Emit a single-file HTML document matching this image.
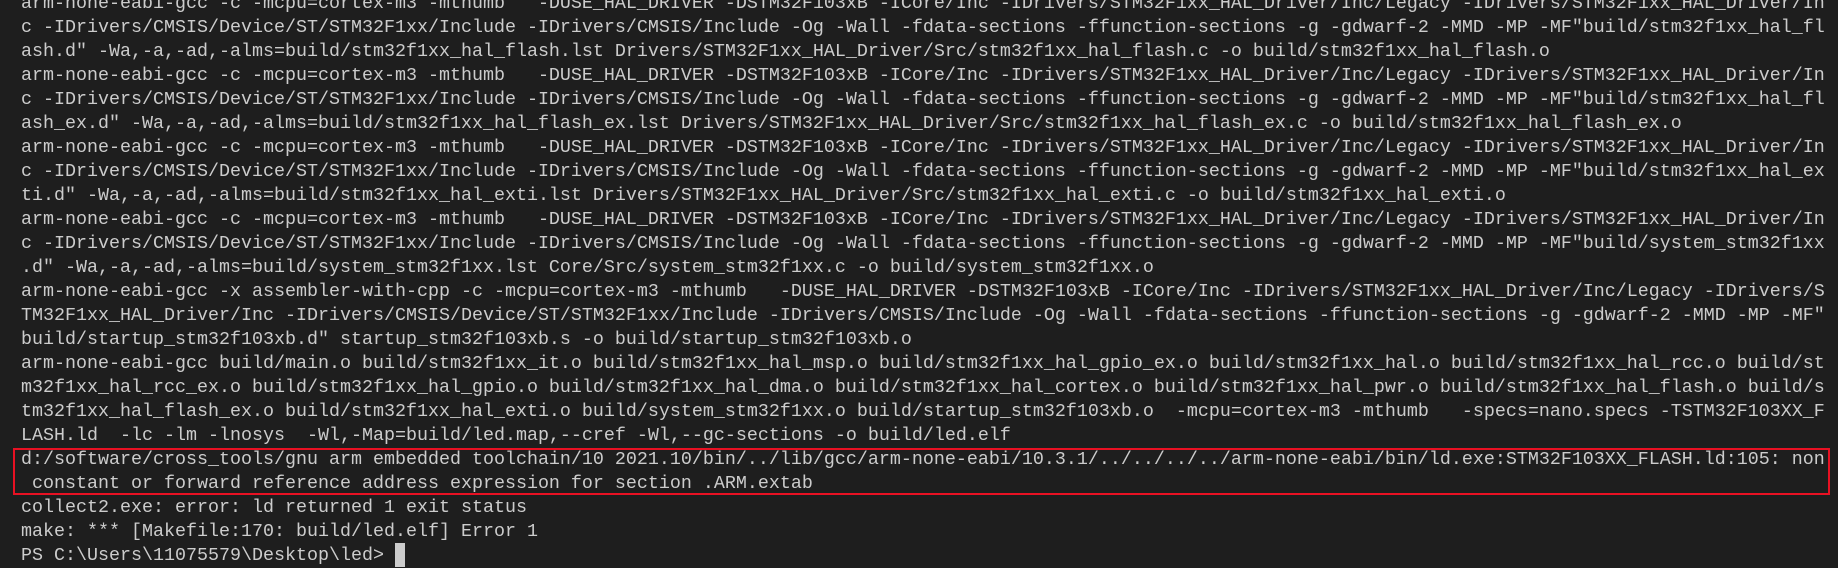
<!DOCTYPE html>
<html><head><meta charset="utf-8"><style>
html,body{margin:0;padding:0;background:#1e1e1e;width:1838px;height:567px;overflow:hidden}
pre{position:absolute;left:21px;top:-8px;margin:0;font-family:"Liberation Mono",monospace;font-size:18.33px;line-height:24px;color:#cccccc;white-space:pre}
.box{position:absolute;left:13px;top:448px;width:1813px;height:43px;border:2px solid #e81123}
.cur{position:absolute;left:395px;top:543px;width:10px;height:24px;background:#cccccc}
</style></head><body>
<pre>arm-none-eabi-gcc -c -mcpu=cortex-m3 -mthumb   -DUSE_HAL_DRIVER -DSTM32F103xB -ICore/Inc -IDrivers/STM32F1xx_HAL_Driver/Inc/Legacy -IDrivers/STM32F1xx_HAL_Driver/In
c -IDrivers/CMSIS/Device/ST/STM32F1xx/Include -IDrivers/CMSIS/Include -Og -Wall -fdata-sections -ffunction-sections -g -gdwarf-2 -MMD -MP -MF"build/stm32f1xx_hal_fl
ash.d" -Wa,-a,-ad,-alms=build/stm32f1xx_hal_flash.lst Drivers/STM32F1xx_HAL_Driver/Src/stm32f1xx_hal_flash.c -o build/stm32f1xx_hal_flash.o
arm-none-eabi-gcc -c -mcpu=cortex-m3 -mthumb   -DUSE_HAL_DRIVER -DSTM32F103xB -ICore/Inc -IDrivers/STM32F1xx_HAL_Driver/Inc/Legacy -IDrivers/STM32F1xx_HAL_Driver/In
c -IDrivers/CMSIS/Device/ST/STM32F1xx/Include -IDrivers/CMSIS/Include -Og -Wall -fdata-sections -ffunction-sections -g -gdwarf-2 -MMD -MP -MF"build/stm32f1xx_hal_fl
ash_ex.d" -Wa,-a,-ad,-alms=build/stm32f1xx_hal_flash_ex.lst Drivers/STM32F1xx_HAL_Driver/Src/stm32f1xx_hal_flash_ex.c -o build/stm32f1xx_hal_flash_ex.o
arm-none-eabi-gcc -c -mcpu=cortex-m3 -mthumb   -DUSE_HAL_DRIVER -DSTM32F103xB -ICore/Inc -IDrivers/STM32F1xx_HAL_Driver/Inc/Legacy -IDrivers/STM32F1xx_HAL_Driver/In
c -IDrivers/CMSIS/Device/ST/STM32F1xx/Include -IDrivers/CMSIS/Include -Og -Wall -fdata-sections -ffunction-sections -g -gdwarf-2 -MMD -MP -MF"build/stm32f1xx_hal_ex
ti.d" -Wa,-a,-ad,-alms=build/stm32f1xx_hal_exti.lst Drivers/STM32F1xx_HAL_Driver/Src/stm32f1xx_hal_exti.c -o build/stm32f1xx_hal_exti.o
arm-none-eabi-gcc -c -mcpu=cortex-m3 -mthumb   -DUSE_HAL_DRIVER -DSTM32F103xB -ICore/Inc -IDrivers/STM32F1xx_HAL_Driver/Inc/Legacy -IDrivers/STM32F1xx_HAL_Driver/In
c -IDrivers/CMSIS/Device/ST/STM32F1xx/Include -IDrivers/CMSIS/Include -Og -Wall -fdata-sections -ffunction-sections -g -gdwarf-2 -MMD -MP -MF"build/system_stm32f1xx
.d" -Wa,-a,-ad,-alms=build/system_stm32f1xx.lst Core/Src/system_stm32f1xx.c -o build/system_stm32f1xx.o
arm-none-eabi-gcc -x assembler-with-cpp -c -mcpu=cortex-m3 -mthumb   -DUSE_HAL_DRIVER -DSTM32F103xB -ICore/Inc -IDrivers/STM32F1xx_HAL_Driver/Inc/Legacy -IDrivers/S
TM32F1xx_HAL_Driver/Inc -IDrivers/CMSIS/Device/ST/STM32F1xx/Include -IDrivers/CMSIS/Include -Og -Wall -fdata-sections -ffunction-sections -g -gdwarf-2 -MMD -MP -MF"
build/startup_stm32f103xb.d" startup_stm32f103xb.s -o build/startup_stm32f103xb.o
arm-none-eabi-gcc build/main.o build/stm32f1xx_it.o build/stm32f1xx_hal_msp.o build/stm32f1xx_hal_gpio_ex.o build/stm32f1xx_hal.o build/stm32f1xx_hal_rcc.o build/st
m32f1xx_hal_rcc_ex.o build/stm32f1xx_hal_gpio.o build/stm32f1xx_hal_dma.o build/stm32f1xx_hal_cortex.o build/stm32f1xx_hal_pwr.o build/stm32f1xx_hal_flash.o build/s
tm32f1xx_hal_flash_ex.o build/stm32f1xx_hal_exti.o build/system_stm32f1xx.o build/startup_stm32f103xb.o  -mcpu=cortex-m3 -mthumb   -specs=nano.specs -TSTM32F103XX_F
LASH.ld  -lc -lm -lnosys  -Wl,-Map=build/led.map,--cref -Wl,--gc-sections -o build/led.elf
d:/software/cross_tools/gnu arm embedded toolchain/10 2021.10/bin/../lib/gcc/arm-none-eabi/10.3.1/../../../../arm-none-eabi/bin/ld.exe:STM32F103XX_FLASH.ld:105: non
 constant or forward reference address expression for section .ARM.extab
collect2.exe: error: ld returned 1 exit status
make: *** [Makefile:170: build/led.elf] Error 1
PS C:\Users\11075579\Desktop\led&gt; </pre>
<div class="box"></div>
<div class="cur"></div>
</body></html>
